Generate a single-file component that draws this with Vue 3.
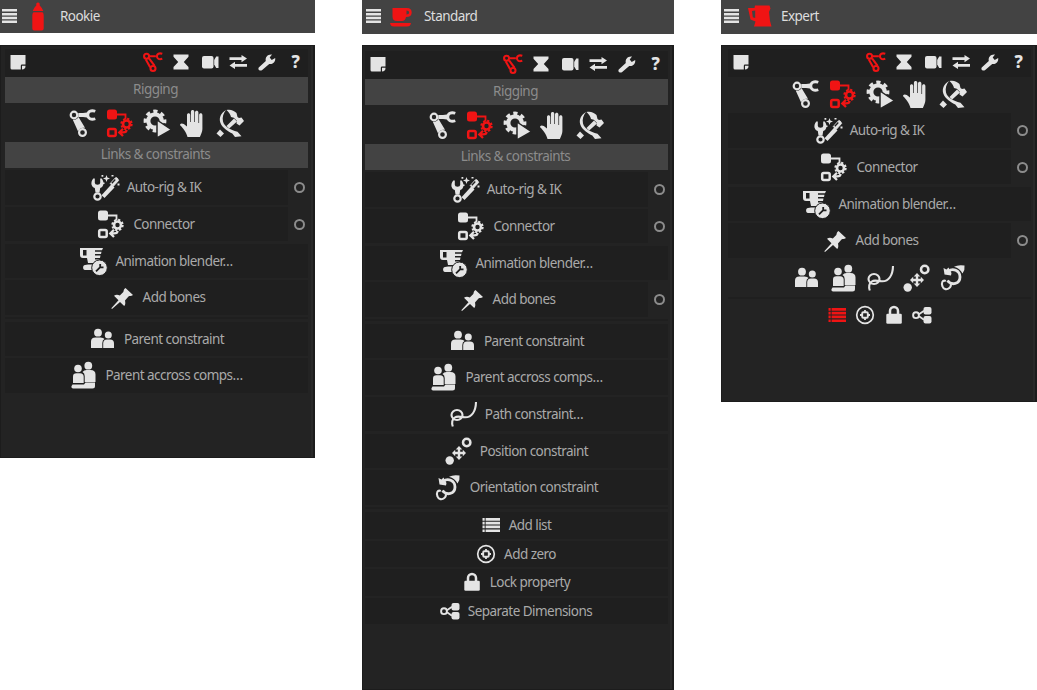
<script setup>
const icons = {
  menu: { v: 16, d: '<path d="M0 1h15v2.6H0zM0 5h15v2.4H0zM0 8.800h15v2.400H0zM0 12.600h15v2.400H0z"/>' },
  note: { v: 20, d: '<path d="M2.500 3h15v9.500h-3.500a1.200 1.200 0 0 0-1.200 1.200V17.500H4a1.500 1.500 0 0 1-1.500-1.500z"/><path d="M14 13.700h3.500q0 3.800-3.500 3.800z"/>' },
  arm: { v: 28, d: '<g fill="none" stroke="currentColor"><circle cx="5" cy="6" r="3.300" stroke-width="2.200"/><circle cx="13.500" cy="23.500" r="3.400" stroke-width="2.200"/><path d="M26.300 2.300C22 .8 18.800 2.500 18.800 6s3.200 5.200 7.500 3.700" stroke-width="2.800"/></g><path d="M9.300 4H14l4-.5v5L14 8H9.300zM3.800 10.800Q8 11 9.500 8L16 18.800Q10.500 18 9.100 22.500z"/>' },
  armThin: { v: 28, d: '<g fill="none" stroke="currentColor" stroke-width="2.900"><circle cx="5" cy="6" r="3.500"/><circle cx="14" cy="23" r="3.500"/><path d="M9 6h9M3.800 10l6.200 11.500M8.500 9l7.800 10.500M27 2.500C22.500 1 19.500 2.500 19.500 6s3 5 7.500 3.500"/></g>' },
  link: { v: 28, d: '<rect x="1" y="0.500" width="10" height="10" rx="2.500"/><rect x="2.200" y="20" width="7.500" height="7" rx="1.500" fill="none" stroke="currentColor" stroke-width="2.500"/><path d="M11 5.500h8.500V10" fill="none" stroke="currentColor" stroke-width="1.800"/><circle cx="20.500" cy="15" r="3.500" fill="none" stroke="currentColor" stroke-width="2.600"/><circle cx="20.500" cy="15" r="5.200" fill="none" stroke="currentColor" stroke-width="2" stroke-dasharray="2.200 1.884"/><path d="M17 19.800L13.300 23.400 17 27M13.500 23.400H17q3.500 0 3.500-2.400" fill="none" stroke="currentColor" stroke-width="2.300"/>' },
  gearplay: { v: 28, d: '<circle cx="12" cy="12" r="6.700" fill="none" stroke="currentColor" stroke-width="4.200"/><circle cx="12" cy="12" r="9.700" fill="none" stroke="currentColor" stroke-width="3.400" stroke-dasharray="4.200 3.418" stroke-dashoffset="2"/><path d="M14 11l14.500 9.700-14.500 8.300z" stroke="#232323" stroke-width="1.500"/>' },
  hand: { v: 28, d: '<path d="M8.500 28C7.500 23 3.500 18.500 1.300 16.500c-1-1.500 1-3 3.500-1.500L8 17.500V6c0-2.500 3.200-2.500 3.200 0v7h.7V3c0-2.600 3.400-2.600 3.400 0v10h.7V3.500c0-2.500 3.400-2.500 3.400 0V14h.7V6c0-2.300 3.300-2.300 3.300 0v14c0 3-1.500 5-2.500 8z"/>' },
  tools: { v: 28, d: '<path d="M10 1C5 4 2.800 8.500 4.300 13.500c1.700 5.500 8 9 12 11L19 28l6.500-.7-4-4.500C14 20.500 8.500 18 7 12.500 6 8 7.500 4 10 1z"/><path d="M.500 24.500l3.500-4 4 4-3.500 3.500zM10.500 17L18 9.500l3 3-7.800 7z"/><path d="M10.500 1c4-1 7.500.5 10 3l1 4 1.500 1 2.500-.5 2.500 3.500-4.500 4.500-3-2 .3-2.700-3-3-2.800-.8C14.500 5.500 13 3.500 10.500 1z"/>' },
  autorig: { v: 28, d: '<path d="M2.300 4.500c-3.300 4-2 8.500 1.500 9.500l.7 4.500h4l.7-4.500c3.500-1 4.500-5.500 1.500-9.500H9.200v4.200q0 2-2.700 2t-2.700-2V4.500z"/><circle cx="6.500" cy="22.500" r="3.200" fill="none" stroke="currentColor" stroke-width="2.200"/><path d="M10.500 21.300L20.300 10.500l3.200 3L13.500 24z"/><path d="M19.300 9.500l5.500-6q2 .2 2.800 3l-5.500 6z" stroke="currentColor"/><path d="M20.800 9.300l3.500-3.800" stroke="#1f1f1f" stroke-width="1.300"/><path d="M15.500 1l.9 2.600L19 4.500l-2.600.9-.9 2.600-.9-2.600-2.600-.9 2.600-.9zM10.500 1h1.800v1.800h-1.800zM20.500 1h2v1.500h-2zM26.500 9.500h2v2h-2zM12 8.500h1.500V10H12z"/>' },
  blender: { v: 28, d: '<path d="M1 1h23l-1 2.200h-7v1.600h6.500L22 7h-6v1.600h5.500L21 11h-5v1.500h4.500L19 16H9l-1-5H4a3 3 0 0 1-3-3zm3 2v5.500h3.500V3z" fill-rule="evenodd"/><path d="M9 17.500h6V23H6c-2.500 0-2.500-5 0-5z"/><circle cx="20.500" cy="20.800" r="7.800" stroke="#1f1f1f"/><path d="M17 24.300l4.500-4.500M21.200 17v3.400h3.300" stroke="#1f1f1f" stroke-width="1.800" fill="none"/>' },
  pin: { v: 28, d: '<path d="M18.500 4l7.500 7c-2 1.500-3.500.5-4.500 1.500L18 16.500c.5 2.500.5 4.300-.8 5.500L13 18l-8 7-.7-.7 7.200-8-4.500-4.500c2-1.500 3.800-1.300 5.800-.3L16.300 8c.7-1.500 0-2.500 2.200-4z"/>' },
  parent: { v: 28, d: '<circle cx="10" cy="7.700" r="3.900"/><path d="M3 23v-6.500q0-4 4.500-4h5q3 0 4 1.500-2.200 1-2.200 4v5z"/><circle cx="20.300" cy="10" r="3.500"/><path d="M15.200 23v-4.500q0-4 3.800-4h3q4 0 4 4V23z"/>' },
  parents: { v: 28, d: '<circle cx="9" cy="7.500" r="3.800"/><circle cx="19.300" cy="4.700" r="3.900"/><path d="M4 22v-6.500q0-3.300 3.500-3.300h3.500q3.700 0 3.700 3.500V22z"/><path d="M13.500 11q1.500-2 4-2h4q5 0 5 4.500v7.500H15.700v-6q0-3-2.200-4zM3.500 23.500h11.500l1.500-2h9.500v3.500q0 2.500-2.500 2.500h-19.500Q1 26.500 3.500 23.500z"/>' },
  path: { v: 28, d: '<g fill="none" stroke="currentColor" stroke-width="2.100"><ellipse cx="8" cy="15" rx="5.500" ry="5"/><path d="M3.800 26.500c-1.300-4-.8-7 2-9s5.500-.3 10-.2c7 .3 11-6 11.200-15.300"/></g>' },
  position: { v: 28, d: '<circle cx="5.700" cy="23.500" r="4.200"/><circle cx="22.700" cy="5.500" r="3.700" fill="none" stroke="currentColor" stroke-width="2.500"/><path d="M15 9l3.300 3.500h-2.100v2.300h2.600v-2.100L22 16l-3.200 3.300v-2.100h-2.600v2.300h2.100L15 23l-3.300-3.500h2.100v-2.300h-2.600v2.100L8 16l3.200-3.300v2.100h2.600v-2.300h-2.100z"/>' },
  orient: { v: 28, d: '<g fill="none" stroke="currentColor"><path d="M9.500 7.500c4-4 11.500-1 11.500 5.500 0 7-8.500 9-12.500 3.500" stroke-width="2.800"/><path d="M6.800 17C3.500 15.500 2 19 3.500 22.500c1 3 4.500 3.500 6.800 1.500q2-1.500 1.500-4" stroke-width="2.100"/></g><path d="M4.500 4l3 1.500 2-2 3 5.500-.5 2.500-6.500-1zM15 2.700Q19 .5 25.500 1.500q.7 4-2 8Q21 4.500 15 2.700z"/>' },
  list: { v: 20, d: '<path d="M1.500 3h2.200v2.700H1.500zM4.600 3H19v2.700H4.600zM1.500 6.800h2.200v2.700H1.500zM4.600 6.800H19v2.700H4.600zM1.500 10.600h2.200v2.700H1.500zM4.600 10.600H19v2.700H4.600zM1.500 14.400h2.200v2.700H1.500zM4.600 14.400H19v2.700H4.600z"/>' },
  zero: { v: 20, d: '<g fill="none" stroke="currentColor"><circle cx="10" cy="10" r="8.300" stroke-width="1.700"/><rect x="7.200" y="7.200" width="5.600" height="5.600" rx="1" stroke-width="1.900"/><path d="M10 5v2M10 13v2M5 10h2M13 10h2" stroke-width="1.800"/></g>' },
  lock: { v: 20, d: '<path d="M6 9.500V6a4 4 0 0 1 8 0v3.500" fill="none" stroke="currentColor" stroke-width="2.500"/><rect x="2.300" y="8.700" width="15.500" height="10" rx="1.300"/>' },
  separate: { v: 20, d: '<circle cx="4" cy="10.200" r="2.900" fill="none" stroke="currentColor" stroke-width="1.900"/><path d="M7 9.200l5-3.500M7 11.200l5 3.500" stroke="currentColor" stroke-width="1.700"/><rect x="11.500" y="2" width="8" height="7.500" rx="2"/><rect x="11.500" y="11" width="8" height="7.500" rx="2"/>' },
  hourglass: { v: 20, d: '<path d="M2.500 2.500h15v2.200L12.800 10l4.700 5v2.500h-15V15l4.700-5-4.700-5.300z"/>' },
  camera: { v: 20, d: '<rect x="2" y="4" width="11.500" height="12.500" rx="2"/><path d="M14.200 8l2-3.500h2.300v11.500h-2.300l-2-3.500z"/>' },
  swap: { v: 20, d: '<path d="M1.500 5.300h12V3L19 6.600l-5.500 3.700V7.900h-12zM19 14.700H7v2.300L1.500 13.400 7 9.700v2.400h12z"/>' },
  wrench: { v: 20, d: '<path d="M2 15.300l6.800-6.300c-.8-4 2-7 6.200-6.500l-2.300 3 2 2.500 3.500-2c.5 4-2.500 6.500-6 6l-7 6c-2.200 1.700-5-.5-3.200-2.700z"/>' },
  rookie: { v: 28, d: '<path d="M14 .5c1.500 0 2 1.300 1.600 2.700L17.800 6l1.500 3H8.700l1.500-3 2.200-2.800C12 1.800 12.500.5 14 .5zM9.500 10.300h9q1.200 1 1.200 3v13.200q0 2-2 2h-7.400q-2 0-2-2V13.300q0-2 1.200-3z"/>' },
  standard: { v: 28, d: '<path d="M4.500 6H19q4.700 0 4.700 4.500t-5.700 4.500Q17.300 19 14 19H9Q4.500 19 4.500 14.500zM18.500 8.500v4q2.700 0 2.700-2t-2.700-2z" fill-rule="evenodd"/><path d="M2 21h21q-.5 3.500-4 3.500H6Q2.500 24.500 2 21z"/>' },
  expert: { v: 28, d: '<path d="M9 3.500h14.500l1 3L23 10l1 9 1.500 5.500H8l1.500-5-5-2L2 6h6.500zM6 9l.8 6.300 2.400.7V8.500z" fill-rule="evenodd"/>' },
}
const tb = ['armThin', 'hourglass', 'camera', 'swap', 'wrench']
const tabs = ['arm', 'link', 'gearplay', 'hand', 'tools']
const r = (icon, text, dot) => ({ icon, text, dot })
const base = d => [r('autorig', 'Auto-rig & IK', true), r('link', 'Connector', true), r('blender', 'Animation blender…', false), r('pin', 'Add bones', d)]
const par = [r('parent', 'Parent constraint'), r('parents', 'Parent accross comps…')]
const panels = [
  { id: 'rookie', name: 'Rookie', bars: true, rows: base(false), group: par },
  { id: 'standard', name: 'Standard', bars: true, rows: base(true),
    group: [...par, r('path', 'Path constraint…'), r('position', 'Position constraint'), r('orient', 'Orientation constraint')],
    small: [r('list', 'Add list'), r('zero', 'Add zero'), r('lock', 'Lock property'), r('separate', 'Separate Dimensions')] },
  { id: 'expert', name: 'Expert', bars: false, rows: base(true),
    big: ['parent', 'parents', 'path', 'position', 'orient'], mini: ['list', 'zero', 'lock', 'separate'] },
]
const box = n => `0 0 ${icons[n].v} ${icons[n].v}`
</script>

<template>
  <main class="page">
    <section v-for="p in panels" :key="p.id" class="col" :class="p.id">
      <header class="head">
        <svg class="menu" :viewBox="box('menu')" v-html="icons.menu.d" />
        <svg class="i28 red" :viewBox="box(p.id)" v-html="icons[p.id].d" />
        <span class="title">{{ p.name }}</span>
      </header>
      <div class="panel">
        <div class="content">
          <div class="toolbar">
            <svg class="i20 note" :viewBox="box('note')" v-html="icons.note.d" />
            <svg v-for="(t, i) in tb" :key="t" class="i20" :class="{ red: i === 0 }" :viewBox="box(t)" v-html="icons[t].d" />
            <span class="help">?</span>
          </div>
          <div v-if="p.bars" class="bar"><span>Rigging</span></div>
          <div class="tabs">
            <svg v-for="t in tabs" :key="t" class="i28" :class="{ red: t === 'link' }" :viewBox="box(t)" v-html="icons[t].d" />
          </div>
          <div v-if="p.bars" class="bar"><span>Links &amp; constraints</span></div>
          <div class="rows">
            <div v-for="x in p.rows" :key="x.text" class="row">
              <div class="btn"><svg class="i28" :viewBox="box(x.icon)" v-html="icons[x.icon].d" /><span>{{ x.text }}</span></div>
              <div v-if="x.dot" class="opt"><i /></div>
            </div>
          </div>
          <template v-if="p.group">
            <div class="sep" />
            <div class="rows">
              <div v-for="x in p.group" :key="x.text" class="row">
                <div class="btn"><svg class="i28" :viewBox="box(x.icon)" v-html="icons[x.icon].d" /><span>{{ x.text }}</span></div>
              </div>
            </div>
          </template>
          <template v-if="p.small">
            <div class="sep" />
            <div class="rows small">
              <div v-for="x in p.small" :key="x.text" class="row">
                <div class="btn"><svg class="i20" :viewBox="box(x.icon)" v-html="icons[x.icon].d" /><span>{{ x.text }}</span></div>
              </div>
            </div>
          </template>
          <template v-if="p.big">
            <div class="tabs lower"><svg v-for="t in p.big" :key="t" class="i28" :viewBox="box(t)" v-html="icons[t].d" /></div>
            <div class="line" />
            <div class="mini"><svg v-for="t in p.mini" :key="t" class="i20" :class="{ red: t === 'list' }" :viewBox="box(t)" v-html="icons[t].d" /></div>
          </template>
        </div>
      </div>
    </section>
  </main>
</template>

<style>
body { background: #fff; }
</style>
<style scoped>
.page { display: flex; align-items: flex-start; justify-content: space-between; width: 1037px; height: 690px; overflow: hidden; font: 13.500px/20px "Noto Sans", "Open Sans", sans-serif; letter-spacing: -0.540px; color: #aaa; }
.page *, .page { box-sizing: border-box; }
svg { fill: currentColor; color: #e4e4e4; flex: none; display: block; overflow: visible; }
svg.red { color: #f01414; }
.i28 { width: 28px; height: 28px; }
.i20 { width: 20px; height: 20px; }
.col { width: 315px; }
.standard { width: 312px; }
.expert { width: 316px; }
.head { height: 33px; margin-bottom: 12px; background: #434343; display: flex; align-items: center; padding: 0 0 1px 2px; color: #ddd; }
.standard .head, .expert .head { height: 34px; margin-bottom: 11px; padding-bottom: 2px; }
.standard .head { padding-left: 4px; }
.expert .head { padding-left: 3px; }
.menu { width: 16px; height: 16px; margin-right: 6px; }
.title { margin-left: 8px; }
.expert .title { margin-left: 7px; }
.panel { height: 413px; background: #232323; border: solid #1c1c1c; border-width: 1px 2px 1px 1px; padding-left: 4px; padding-top: 3px; box-shadow: inset -2px 0 #292929; }
.standard .panel { height: 645px; padding-left: 2px; padding-top: 5px; }
.expert .panel { height: 357px; padding-left: 6px; padding-top: 3px; }
.content { width: 303px; }
.toolbar { height: 28px; display: flex; align-items: center; gap: 8.600px; background: #1f1f1f; padding: 0 2.500px 2px; }
.note { margin-right: auto; }
.help { width: 20px; text-align: center; font-weight: 800; font-size: 17px; color: #e4e4e4; }
.bar { height: 26px; background: #434343; color: #8c8c8c; display: flex; align-items: center; justify-content: center; padding-right: 2px; padding-bottom: 2px; }
.tabs { height: 39px; display: flex; align-items: center; justify-content: center; gap: 8.700px; }
.expert .tabs { height: 34px; }
.rows { display: flex; flex-direction: column; gap: 2.400px; padding-top: 2.400px; }
.row { display: flex; height: 34.300px; }
.btn { flex: 1; background: #1f1f1f; display: flex; align-items: center; justify-content: center; gap: 8px; white-space: nowrap; padding-right: 1px; }
.btn > span { margin-top: -0.500px; }
.opt { width: 20px; padding-left: 2px; display: flex; align-items: center; justify-content: center; }
.opt i { width: 11px; height: 11px; border: 2.500px solid #8c8c8c; border-radius: 50%; }
.sep { height: 2px; background: #1f1f1f; margin: 2.500px 0 0; }
.small { gap: 2px; padding-top: 3px; }
.small .row { height: 26.500px; }
.expert .lower { height: 37px; margin-top: 2px; }
.line { height: 2px; background: #1f1f1f; }
.mini { display: flex; justify-content: center; gap: 8.600px; margin-top: 6px; }
</style>
